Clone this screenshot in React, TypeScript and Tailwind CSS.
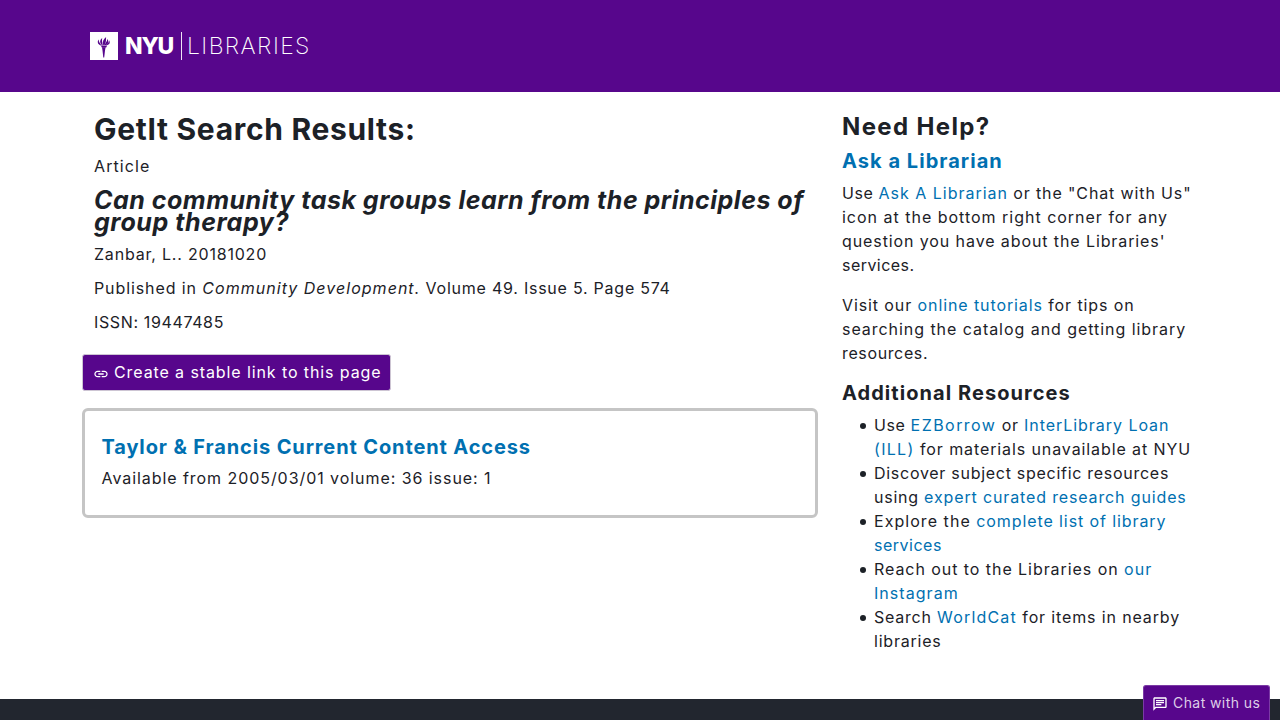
import type { ReactNode } from "react";
import { MdLink, MdOutlineChat } from "react-icons/md";

function A({ children, className = "" }: { children: ReactNode; className?: string }) {
  return <a href="#" className={`text-[#0070b1] ${className}`}>{children}</a>;
}

function S({ children, className }: { children: ReactNode; className: string }) {
  return <span className={className}>{children}</span>;
}

function Item({ children }: { children: ReactNode }) {
  return (
    <li className="flex">
      <span className="ml-[18px] mr-[8px] mt-[10px] h-[6px] w-[6px] shrink-0 rounded-full bg-[#1c2127]" />
      <div>{children}</div>
    </li>
  );
}

function Torch() {
  return (
    <svg viewBox="0 0 28 28" className="h-[28px] w-[28px] bg-white" fill="#57068c">
      <path d="M12 15.2h3.6l-.6 3.4-.8 7h-.9l-.8-7z" />
      <path d="M10.9 13.6h6.2l-.9 1.9h-4.4z" />
      <path d="M10.8 13.4C7.6 12.6 7 9.6 8.7 7.6c0 2 .9 3.5 2.6 5.6z" />
      <path d="M12 13.2C9.3 10.6 9.8 7.8 12.2 6c-.5 2.6.1 4.6.6 7.2z" />
      <path d="M13.2 13.1c-1-3.4.2-5.7 2.9-8-.3 2.7.5 4.4-1.5 8z" />
      <path d="M14.9 13.1c.1-2.6 2.6-3.4 2.3-6.4 1.8 2.3 1.3 5-.9 6.4z" />
      <path d="M16.6 13.2c.6-1.5 2.6-2.4 2.4-4.9 1.5 2.2.7 4.6-2.4 4.9z" />
    </svg>
  );
}

export default function App() {
  return (
    <div className="flex h-[720px] w-full flex-col overflow-hidden bg-white font-['Inter','Liberation_Sans',sans-serif] text-base leading-6 tracking-[0.9px] text-[#1c2127]">
      <header className="flex h-[92px] shrink-0 items-center bg-[#57068c] pl-[90px] text-white">
        <Torch />
        <span className="ml-[7px] w-[56px] text-[23px] font-extrabold leading-7 tracking-[-1.2px]">NYU</span>
        <span className="h-7 w-px bg-white/90" />
        <span className="ml-[5px] text-[23px] font-extralight leading-7 tracking-[1.4px]">LIBRARIES</span>
      </header>

      <div className="flex min-h-0 flex-1 whitespace-nowrap pl-[82px]">
        <main className="flex w-[736px] shrink-0 flex-col items-start">
          <div className="pl-3">
            <h1 className="mt-[19px] text-[30px] font-bold leading-9 tracking-[0.68px]">GetIt Search Results:</h1>
            <p className="mt-[7px] tracking-[1.1px]">Article</p>
            <h2 className="mt-[11px] text-[25px] font-bold italic leading-[22px] tracking-[0.51px]">
              Can community task groups learn from the principles of
              <br />
              <S className="tracking-[0.55px]">group therapy?</S>
            </h2>
            <p className="mt-[9px] tracking-[0.8px]">Zanbar, L.. 20181020</p>
            <p className="mt-[10px]">
              Published in <i className="tracking-[1.03px]">Community Development.</i>
              <S className="tracking-[0.76px]"> Volume 49. Issue 5. Page 574</S>
            </p>
            <p className="mt-[10px] tracking-[0.63px]">ISSN: 19447485</p>
          </div>
          <button className="mt-5 flex h-[37px] w-[309px] items-center rounded-[3px] border border-[#cdc5d3] bg-[#57068c] pl-[10px] text-white">
            <MdLink className="mr-[5px] mt-[2px] h-4 w-4" />
            <S className="-mt-[2px] tracking-[0.9px]">Create a stable link to this page</S>
          </button>
          <section className="mt-[16.5px] h-[110px] w-full rounded-[6px] border-[3px] border-[#c5c5c5] pl-[16.5px] pt-6">
            <h3 className="text-xl font-bold leading-6 tracking-[0.87px]">
              <A>Taylor &amp; Francis Current Content Access</A>
            </h3>
            <p className="mt-[7px] tracking-[0.94px]">Available from 2005/03/01 volume: 36 issue: 1</p>
          </section>
        </main>

        <aside className="ml-6">
          <h2 className="mt-[21px] text-2xl font-bold leading-7 tracking-[1.35px]">Need Help?</h2>
          <h3 className="mt-[8px] text-xl font-bold leading-6 tracking-[1.04px]">
            <A>Ask a Librarian</A>
          </h3>
          <p className="mt-[8px]">
            <S className="tracking-[0.6px]">Use </S>
            <A className="tracking-[0.98px]">Ask A Librarian</A>
            <S className="tracking-[0.87px]"> or the "Chat with Us"</S>
            <br />
            <S className="tracking-[0.99px]">icon at the bottom right corner for any</S>
            <br />
            question you have about the Libraries'
            <br />
            <S className="tracking-[0.45px]">services.</S>
          </p>
          <p className="mt-4">
            Visit our <A>online tutorials</A> for tips on
            <br />
            <S className="tracking-[0.95px]">searching the catalog and getting library</S>
            <br />
            <S className="tracking-[0.63px]">resources.</S>
          </p>
          <h3 className="mt-4 text-xl font-bold leading-6 tracking-[1.06px]">Additional Resources</h3>
          <ul className="mt-2">
            <Item>
              <S className="tracking-[0.6px]">Use </S>
              <A className="tracking-[1.45px]">EZBorrow</A>
              <S className="tracking-[0.75px]"> or </S>
              <A className="tracking-[0.96px]">InterLibrary Loan</A>
              <br />
              <A className="tracking-[1.3px]">(ILL)</A> for materials unavailable at NYU
            </Item>
            <Item>
              <S className="tracking-[0.72px]">Discover subject specific resources</S>
              <br />
              <S className="tracking-[0.76px]">using </S>
              <A className="tracking-[0.86px]">expert curated research guides</A>
            </Item>
            <Item>
              <S className="tracking-[1.05px]">Explore the </S>
              <A>complete list of library</A>
              <br />
              <A className="tracking-[0.5px]">services</A>
            </Item>
            <Item>
              <S className="tracking-[0.94px]">Reach out to the Libraries on </S>
              <A className="tracking-[1.1px]">our</A>
              <br />
              <A className="tracking-[1.05px]">Instagram</A>
            </Item>
            <Item>
              <S className="tracking-[0.77px]">Search </S>
              <A className="tracking-[1.2px]">WorldCat</A>
              <S className="tracking-[0.86px]"> for items in nearby</S>
              <br />
              <S className="tracking-[0.78px]">libraries</S>
            </Item>
          </ul>
        </aside>
      </div>

      <footer className="flex h-[21px] shrink-0 items-end justify-end bg-[#22262f] pr-[10px]">
        <button className="flex h-[35.5px] w-[127px] shrink-0 items-center rounded-t-[3px] border border-b-0 border-[#7b3aa5] bg-[#57068c] pl-[8px] text-sm tracking-[0.42px] text-[#ddcde8]">
          <MdOutlineChat className="mr-[5px] mt-[2px] h-4 w-4 text-white" />
          <span>Chat with us</span>
        </button>
      </footer>
    </div>
  );
}
